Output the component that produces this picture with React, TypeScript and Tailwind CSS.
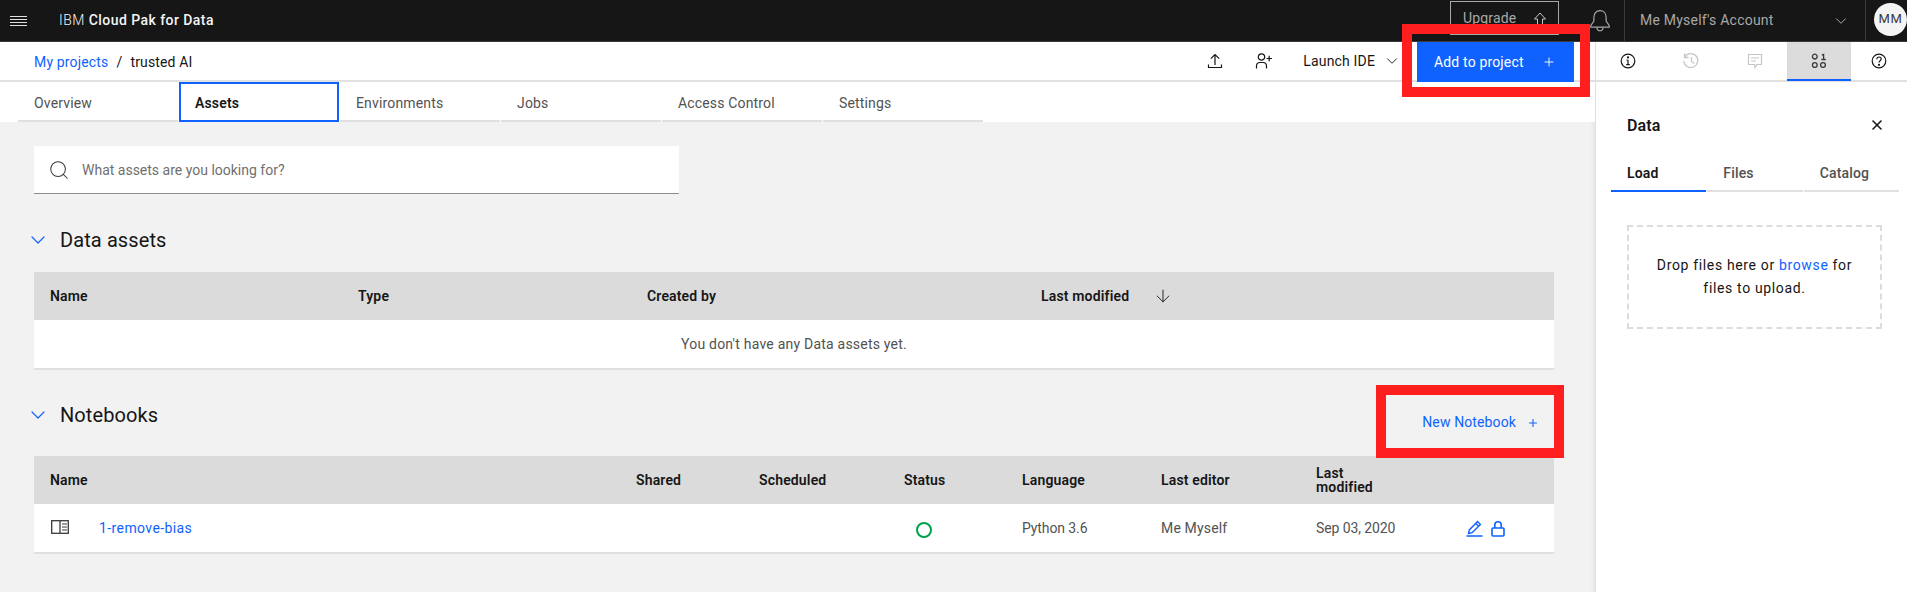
import { ChevronDown, Plus, Search, X, ArrowDown } from 'lucide-react';

const FONT = "font-['Roboto','Liberation_Sans',sans-serif]";

const TABS = ['Overview', 'Assets', 'Environments', 'Jobs', 'Access Control', 'Settings'];

const DATA_COLS = [
  { label: 'Name', w: 'w-[308px]' },
  { label: 'Type', w: 'w-[289px]' },
  { label: 'Created by', w: 'w-[394px]' },
];

const NOTEBOOK_COLS = [
  { label: 'Name', w: 'w-[586px]' },
  { label: 'Shared', w: 'w-[123px]' },
  { label: 'Scheduled', w: 'w-[145px]' },
  { label: 'Status', w: 'w-[118px]' },
  { label: 'Language', w: 'w-[139px]' },
  { label: 'Last editor', w: 'w-[155px]' },
];

function NotebookIcon() {
  return (
    <svg width="18" height="14" viewBox="0 0 18 14" fill="none" stroke="#393939" strokeWidth="1.3" className="mt-[-3px]">
      <rect x="0.7" y="0.7" width="16.6" height="12.6" />
      <path d="M9 1v12" strokeWidth="1.3" />
      <path d="M11 4h5M11 7h5M11 10h5" strokeWidth="1.2" />
    </svg>
  );
}

function DataIcon() {
  return (
    <svg width="16" height="16" viewBox="0 0 16 16" fill="none" stroke="#393939" strokeWidth="1.3">
      <circle cx="3.8" cy="3.6" r="2.4" />
      <path d="M10.8 2.2l1.8-.8v5M10.4 6.5h4.4" />
      <circle cx="3.8" cy="12" r="2.4" />
      <circle cx="12" cy="12" r="2.4" />
    </svg>
  );
}

function Section({ title }: { title: string }) {
  return (
    <div className="flex items-center">
      <ChevronDown size={24} strokeWidth={1.2} className="text-[#0f62fe] ml-[-5px] mr-[10px]" />
      <h2 className="text-[20px] leading-7 text-[#161616] tracking-[0.1px]">{title}</h2>
    </div>
  );
}

export default function App() {
  return (
    <div className={`${FONT} relative flex flex-col w-[1907px] h-[592px] overflow-hidden bg-white text-[14px] tracking-[0.16px]`}>
      {/* Top bar */}
      <header className="flex items-center h-[42px] shrink-0 bg-[#161616] text-[#f4f4f4] border-b border-[#393939]">
        <div className="flex flex-col gap-[2px] ml-[10px] w-[17px]">
          <span className="h-px bg-[#e0e0e0]" />
          <span className="h-px bg-[#e0e0e0]" />
          <span className="h-px bg-[#e0e0e0]" />
          <span className="h-px bg-[#e0e0e0]" />
        </div>
        <div className="ml-[32px] tracking-[0.45px]">
          <span className="font-light">IBM </span>
          <span className="font-medium">Cloud Pak for Data</span>
        </div>
        <div className="ml-auto flex items-center h-full">
          <div className="flex items-center justify-between w-[109px] h-[34px] mb-[6px] pl-[12px] pr-[11px] pt-[2px] border border-[#a8a8a8] text-[#a8a8a8]">
            Upgrade
            <svg width="14" height="14" viewBox="0 0 14 14" fill="none" stroke="#c6c6c6" strokeWidth="1">
              <path d="M7 1l5.5 6H9.5v6h-5V7H1.5z" />
            </svg>
          </div>
          <svg width="24" height="24" viewBox="0 0 20 22" fill="none" stroke="#a8a8a8" strokeWidth="1.1" className="ml-[29px] mr-[12px]">
            <path d="M10 1.5c-3.6 0-5.6 2.8-5.600 6v3.600L1.600 15v1.600h16.800V15l-2.800-3.900V7.500c0-3.200-2-6-5.600-6z" />
            <path d="M7.200 16.800c0 2 1.200 3.200 2.800 3.200s2.800-1.200 2.800-3.200" />
          </svg>
          <div className="flex items-center h-full w-[242px] border-x border-[#393939] pl-[15px] text-[#a8a8a8] tracking-[0.22px]">
            Me Myself's Account
            <ChevronDown size={18} strokeWidth={1.1} className="ml-auto mr-[15px] text-[#c6c6c6]" />
          </div>
          <div className="flex items-center justify-center w-[33px] h-[33px] ml-[8px] mb-[3px] rounded-full bg-[#f4f4f4] text-[#393939] text-[13px] tracking-[0.6px]">
            MM
          </div>
        </div>
      </header>

      <div className="flex flex-1 min-h-0">
        {/* Main column */}
        <div className="flex flex-col w-[1595px] shrink-0">
          <div className="flex items-center h-[40px] shrink-0 border-b-2 border-[#e0e0e0] pl-[34px]">
            <a className="text-[#0f62fe] pt-[3px]">My projects</a>
            <span className="mx-[8px] pt-[3px] text-[#161616]">/</span>
            <span className="text-[#161616] pt-[3px]">trusted AI</span>
            <div className="ml-auto flex items-center">
              <svg width="16" height="16" viewBox="0 0 16 16" fill="none" stroke="#161616" strokeWidth="1.2">
                <path d="M1.5 11.5v3h13v-3M8 12V1.5M3.8 5.600L8 1.500l4.200 4.100" />
              </svg>
              <svg width="18" height="16" viewBox="0 0 18 16" fill="none" stroke="#161616" strokeWidth="1.2" className="ml-[32px]">
                <circle cx="6.5" cy="4" r="3.2" />
                <path d="M1.5 15.5v-2.5c0-2 1.5-3.5 3.5-3.500h3c2 0 3.500 1.500 3.500 3.500v2.500M11.500 5.500h5.500M14.200 2.800v5.400" />
              </svg>
              <span className="ml-[30px] pt-px text-[#161616]">Launch IDE</span>
              <ChevronDown size={18} strokeWidth={1.2} className="ml-[8px] text-[#161616]" />
              <button className="flex items-center justify-between w-[157px] h-[40px] ml-[16px] mr-[21px] mb-[-1px] pl-[17px] pr-[18px] pt-px bg-[#0f62fe] text-white">
                Add to project
                <Plus size={14} strokeWidth={1.6} />
              </button>
            </div>
          </div>

          <nav className="flex h-[40px] shrink-0 pl-[18px]">
            {TABS.map(tab => (
              <div
                key={tab}
                className={
                  tab === 'Assets'
                    ? 'flex items-center w-[160px] mr-px border-2 border-[#0f62fe] pl-[14px] pt-[2px] font-semibold text-[#161616]'
                    : 'flex items-center w-[160px] mr-px border-b-2 border-[#e0e0e0] pl-[16px] pt-[4px] text-[#525252]'
                }
              >
                {tab}
              </div>
            ))}
          </nav>

          <main className="flex-1 bg-[#f2f2f2] pl-[34px] pr-[41px] pt-[24px] shadow-[inset_-5px_0_4px_-4px_#e0e0e0]">
            <div className="flex items-center w-[645px] h-[48px] bg-white border-b border-[#8d8d8d] pl-[14px] tracking-[0px] text-[#6f6f6f]">
              <Search size={22} strokeWidth={1.1} className="text-[#393939] mr-[12px]" />
              <span className="pt-px">What assets are you looking for?</span>
            </div>

            <div className="ml-[-3px] mt-[32px]"><Section title="Data assets" /></div>

            <div className="flex items-center h-[48px] mt-[18px] bg-[#dbdbdb] pl-[16px] font-semibold text-[#161616]">
              {DATA_COLS.map(col => (
                <div key={col.label} className={col.w}>{col.label}</div>
              ))}
              <div>Last modified</div>
              <ArrowDown size={20} strokeWidth={1.1} className="ml-[24px]" />
            </div>
            <div className="flex items-center h-[50px] bg-white border-b-2 border-[#e0e0e0] pl-[647px] text-[#525252] tracking-[0.22px]">
              You don't have any Data assets yet.
            </div>

            <div className="ml-[-3px] mt-[31px]"><Section title="Notebooks" /></div>

            <div className="flex items-center h-[48px] mt-[27px] bg-[#dbdbdb] pl-[16px] font-semibold text-[#161616] leading-[14px]">
              {NOTEBOOK_COLS.map(col => (
                <div key={col.label} className={`${col.w} shrink-0`}>{col.label}</div>
              ))}
              <div>Last<br />modified</div>
            </div>
            <div className="flex items-center h-[50px] bg-white border-b-2 border-[#e0e0e0] pl-[17px] pt-px text-[#525252]">
              <div className="flex items-center w-[585px] shrink-0">
                <NotebookIcon />
                <a className="ml-[30px] text-[#0f62fe] tracking-[0.4px]">1-remove-bias</a>
              </div>
              <div className="w-[123px] shrink-0" />
              <div className="w-[145px] shrink-0" />
              <div className="w-[118px] shrink-0 pl-[12px]">
                <div className="w-[16px] h-[16px] mt-[2px] rounded-full border-2 border-[#00a14b]" />
              </div>
              <div className="w-[139px] shrink-0 tracking-[-0.1px]">Python 3.6</div>
              <div className="w-[155px] shrink-0">Me Myself</div>
              <div className="w-[150px] shrink-0 tracking-[-0.1px]">Sep 03, 2020</div>
              <svg width="17" height="17" viewBox="0 0 17 17" fill="none" stroke="#0f62fe" strokeWidth="1.4">
                <path d="M.5 16h16M2.5 13.5l.8-3.600L11.600 1.600l2.800 2.800-8.300 8.300zM9.800 3.400l2.800 2.800" />
              </svg>
              <svg width="14" height="16" viewBox="0 0 14 16" fill="none" stroke="#0f62fe" strokeWidth="1.6" className="ml-[8px]">
                <rect x="1" y="7" width="12" height="8" rx="1" />
                <path d="M3.8 7V4a3.200 3.200 0 016.400 0v3" />
              </svg>
            </div>
          </main>
        </div>

        {/* Right panel */}
        <aside className="flex flex-col flex-1 min-w-0 border-l border-[#e0e0e0]">
          <div className="flex h-[40px] shrink-0 border-b-2 border-[#e0e0e0]">
            <div className="flex items-center justify-center w-[63px]">
              <svg width="16" height="16" viewBox="0 0 16 16" fill="none" stroke="#161616" strokeWidth="1.2">
                <circle cx="8" cy="8" r="6.8" />
                <path d="M8 7v4.5M6.2 11.6h3.6M6.5 7H8" />
                <circle cx="8" cy="4.4" r=".5" fill="#161616" />
              </svg>
            </div>
            <div className="flex items-center justify-center w-[64px]">
              <svg width="18" height="18" viewBox="0 0 18 18" fill="none" stroke="#c6c6c6" strokeWidth="1.3">
                <path d="M2.5 5.5a7 7 0 11-.7 3.500M2.500 1.500v4h4M9.500 5v4.500l3 2" />
              </svg>
            </div>
            <div className="flex items-center justify-center w-[64px]">
              <svg width="16" height="16" viewBox="0 0 16 16" fill="none" stroke="#c6c6c6" strokeWidth="1.2">
                <path d="M1.5 1.5h13v10H9.800L8 14.500l-.5-3h-6zM4 5h8M4 8h5" />
              </svg>
            </div>
            <div className="flex items-center justify-center w-[64px] h-[39px] bg-[#dcdcdc] border-b-2 border-[#0f62fe]">
              <DataIcon />
            </div>
            <div className="flex items-center justify-center flex-1">
              <svg width="16" height="16" viewBox="0 0 16 16" fill="none" stroke="#161616" strokeWidth="1.2">
                <circle cx="8" cy="8" r="6.8" />
                <path d="M5.8 6.2c0-1.3 1-2.200 2.200-2.200s2.200.9 2.200 2c0 1.700-2.200 1.700-2.200 3.600" />
                <circle cx="8" cy="11.8" r=".5" fill="#161616" />
              </svg>
            </div>
          </div>

          <div className="flex items-center justify-between h-[40px] mt-[23px] pl-[31px] pr-[22px]">
            <h3 className="text-[16px] font-semibold text-[#161616] pt-px">Data</h3>
            <X size={16} strokeWidth={2.4} className="text-[#161616]" />
          </div>
          <div className="flex gap-px mt-[6px] pl-[15px] pr-[8px]">
            <div className="flex-1 h-[41px] pl-[16px] pt-[12px] border-b-2 border-[#0f62fe] font-semibold text-[#161616]">Load</div>
            <div className="flex-1 h-[41px] pl-[16px] pt-[12px] border-b-2 border-[#e0e0e0] font-medium text-[#525252]">Files</div>
            <div className="flex-1 h-[41px] pl-[16px] pt-[12px] border-b-2 border-[#e0e0e0] font-medium text-[#525252]">Catalog</div>
          </div>
          <div className="flex items-center justify-center w-[255px] h-[104px] mt-[33px] ml-[31px] border-2 border-dashed border-[#dcdcdc] text-center leading-[23px] text-[#161616] tracking-[0.65px]">
            <p>Drop files here or <a className="text-[#0f62fe]">browse</a> for<br />files to upload.</p>
          </div>
        </aside>
      </div>

      {/* Red annotation boxes */}
      <div className="absolute left-[1402px] top-[24px] w-[188px] h-[73px] border-[10px] border-[#ff1f1f]" />
      <div className="absolute left-[1376px] top-[385px] flex items-center justify-end gap-[11px] w-[188px] h-[73px] border-[10px] border-[#ff1f1f] pr-[15px] pt-[2px] tracking-[0.12px] text-[#0f62fe]">
        New Notebook
        <Plus size={12} strokeWidth={2.2} />
      </div>
    </div>
  );
}
